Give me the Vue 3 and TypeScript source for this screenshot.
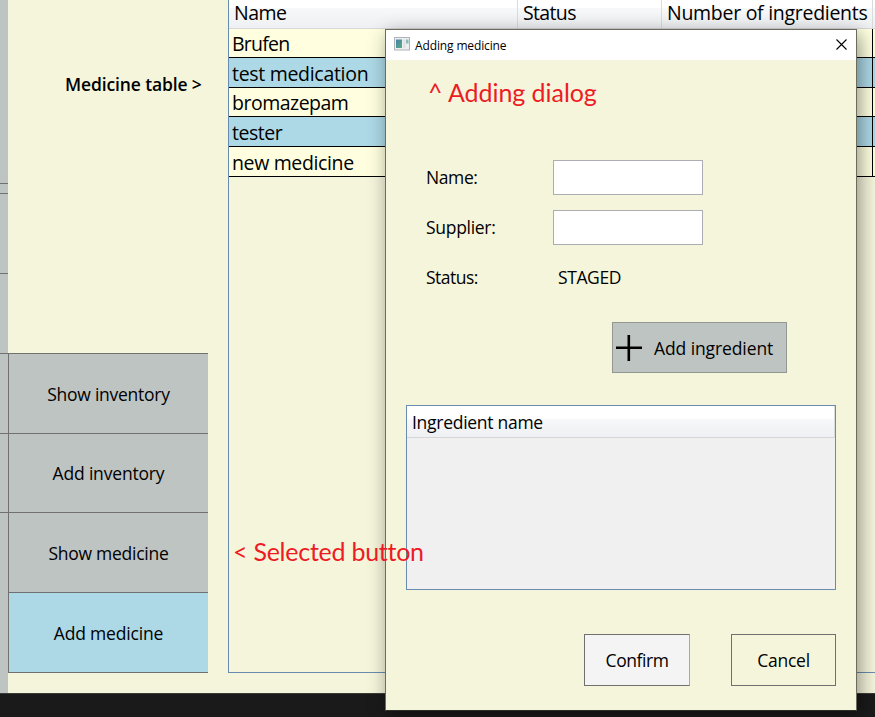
<script setup lang="ts">
interface Medicine {
  name: string
  key: string
}

const medicines: Medicine[] = [
  { name: 'Brufen', key: 'brufen' },
  { name: 'test medication', key: 'test' },
  { name: 'bromazepam', key: 'bromazepam' },
  { name: 'tester', key: 'tester' },
  { name: 'new medicine', key: 'new' },
]

const menu = [
  { label: 'Show inventory', key: 'show-inventory', selected: false },
  { label: 'Add inventory', key: 'add-inventory', selected: false },
  { label: 'Show medicine', key: 'show-medicine', selected: false },
  { label: 'Add medicine', key: 'add-medicine', selected: true },
]
</script>

<template>
  <div class="screen">
    <main class="window">
      <aside class="strip">
        <i v-for="n in 6" :key="n" class="strip-cell"></i>
      </aside>

      <section class="side">
        <h2 class="note"><span class="t-note">Medicine table &gt;</span></h2>
        <nav class="menu">
          <button v-for="item in menu" :key="item.key" class="menu-item" :class="{ selected: item.selected }">
            <span :class="'t-' + item.key">{{ item.label }}</span>
          </button>
        </nav>
      </section>

      <section class="grid">
        <header class="grid-head">
          <div class="head-cell"><span class="t-col-name">Name</span></div>
          <div class="head-cell"><span class="t-col-status">Status</span></div>
          <div class="head-cell"><span class="t-col-number">Number of ingredients</span></div>
          <div class="head-cell"></div>
        </header>
        <div v-for="m in medicines" :key="m.key" class="row" :class="'row-' + m.key">
          <div class="cell"><span :class="'t-' + m.key">{{ m.name }}</span></div>
          <div class="cell"></div>
          <div class="cell"></div>
          <div class="cell last"></div>
        </div>
      </section>
    </main>

    <div class="dialog" role="dialog">
      <header class="titlebar">
        <svg class="app-icon" width="16" height="14" viewBox="0 0 16 14">
          <defs>
            <linearGradient id="pane" x1="0" y1="0" x2="1" y2="1">
              <stop offset="0" stop-color="#4a7fae" />
              <stop offset="1" stop-color="#57b07c" />
            </linearGradient>
          </defs>
          <rect x="0.5" y="0.5" width="15" height="12.5" fill="#eceef0" stroke="#b0b4b9" />
          <rect x="2" y="2.5" width="6" height="8.5" fill="url(#pane)" />
          <rect x="9" y="2.5" width="2.5" height="8.5" fill="#dfe3e8" />
          <rect x="12" y="2.5" width="2.5" height="4" fill="#8bbdb9" />
        </svg>
        <span class="title"><span class="t-title">Adding medicine</span></span>
        <svg class="close" width="11" height="11" viewBox="0 0 11 11">
          <path d="M0.5 0.5L10.5 10.5M10.5 0.5L0.5 10.5" stroke="#000" stroke-width="1.1" fill="none" />
        </svg>
      </header>

      <div class="form">
        <label><span class="t-f-name">Name:</span></label>
        <input type="text" />
        <label><span class="t-f-supplier">Supplier:</span></label>
        <input type="text" />
        <label><span class="t-f-status">Status:</span></label>
        <div class="value"><span class="t-staged">STAGED</span></div>
      </div>

      <button class="add">
        <svg width="26" height="26" viewBox="0 0 26 26">
          <path d="M0 12.8H26M12.8 0V26" stroke="#000" stroke-width="2.6" fill="none" />
        </svg>
        <span class="t-add">Add ingredient</span>
      </button>

      <div class="list">
        <div class="list-head"><span class="t-ingredient">Ingredient name</span></div>
      </div>

      <footer class="actions">
        <button class="confirm"><span class="t-confirm">Confirm</span></button>
        <button class="cancel"><span class="t-cancel">Cancel</span></button>
      </footer>
    </div>

    <p class="callout callout-dialog"><span class="t-c1">^ Adding dialog</span></p>
    <p class="callout callout-button"><span class="t-c2">&lt; Selected button</span></p>
  </div>
</template>

<style>
body {
  margin: 0;
  overflow: hidden;
  background: #1a1a1a;
}
</style>

<style scoped>
.screen {
  position: relative;
  width: 875px;
  height: 717px;
  overflow: hidden;
  background: #1a1a1a;
  color: #000;
  font-family: "Open Sans", "Noto Sans", sans-serif;
  font-size: 17.5px;
}
.screen * {
  box-sizing: border-box;
}
span {
  white-space: nowrap;
}
button {
  padding: 0;
  border-radius: 0;
  font: inherit;
  color: inherit;
}
.t-note { letter-spacing: -0.13px; }
.t-col-name { letter-spacing: -0.5px; }
.t-col-status { letter-spacing: -0.65px; }
.t-col-number { letter-spacing: -0.28px; }
.t-brufen { letter-spacing: -0.75px; }
.t-test { letter-spacing: -0.3px; }
.t-bromazepam { letter-spacing: -0.5px; }
.t-tester { letter-spacing: -0.45px; }
.t-new { letter-spacing: -0.36px; }
.t-show-inventory, .t-show-medicine { letter-spacing: -0.25px; }
.t-add-inventory, .t-add-medicine { letter-spacing: -0.18px; }
.t-title { letter-spacing: -0.13px; }
.t-f-name { letter-spacing: -0.4px; }
.t-f-supplier { letter-spacing: -0.3px; }
.t-f-status { letter-spacing: -0.5px; }
.t-staged { letter-spacing: -0.4px; }
.t-add { letter-spacing: -0.1px; }
.t-ingredient { letter-spacing: -0.28px; }
.t-confirm { letter-spacing: -0.45px; }
.t-cancel { letter-spacing: -0.25px; }
.t-c1 { letter-spacing: -0.05px; }
.t-c2 { letter-spacing: -0.25px; }
.window {
  display: grid;
  grid-template-columns: 8px 200px 667px;
  height: 694px;
  border-bottom: 1px solid #3b3c38;
  background: #f5f5dc;
}
.strip {
  display: grid;
  grid-template-rows: 184px 10px 80px 80px 80px 79px;
  background: #bec4c2;
}
.strip-cell {
  border-bottom: 1px solid #707070;
}
.side {
  display: flex;
  flex-direction: column;
  padding-top: 68px;
}
.note {
  margin: 0;
  padding-left: 57px;
  height: 285px;
  font-size: 17.5px;
  font-weight: 600;
  line-height: 32px;
}
.menu {
  display: grid;
  grid-template-rows: 80px 79px 80px 80px;
  border-bottom: 1px solid #707070;
}
.menu-item {
  display: flex;
  align-items: center;
  justify-content: center;
  border: solid #707070;
  border-width: 1px 0 0 1px;
  background: #bec4c2;
}
.menu-item.selected {
  background: #add8e6;
}
.grid {
  margin-left: 20px;
  height: 673px;
  border: solid #688caf;
  border-width: 0 0 1px 1px;
  font-size: 19.5px;
}
.grid-head,
.row {
  display: grid;
  grid-template-columns: 289px 144px 211px 1fr;
}
.grid-head {
  height: 29px;
  border-bottom: 1px solid #d8d8d8;
  background: linear-gradient(#fff 0 8px, #f7f8f9 8px, #eff0f3 100%);
}
.head-cell {
  border-right: 1px solid #dadbdd;
  padding-left: 5px;
  line-height: 26px;
}
.head-cell:last-child {
  border-right: 0;
}
.row {
  height: 30px;
  grid-template-rows: 100%;
  border-bottom: 1px solid #000;
  background: #ffffe0;
}
.row-brufen,
.row-bromazepam {
  height: 29px;
}
.row-test,
.row-tester {
  background: #add8e6;
}
.cell {
  border-right: 1px solid #000;
  padding-left: 3px;
  line-height: 31px;
}
.row-brufen .cell,
.row-bromazepam .cell {
  line-height: 29px;
}
.cell.last {
  border-right: 0;
}
.dialog {
  position: absolute;
  left: 385px;
  top: 29px;
  width: 472px;
  height: 682px;
  border: 1px solid #6b6b5e;
  border-bottom-color: #2c2d29;
  background: #f5f5dc;
  box-shadow: 3px 5px 18px rgba(0, 0, 0, 0.42);
}
.titlebar {
  display: flex;
  align-items: center;
  height: 30px;
  padding: 0 10px 0 8px;
  background: #fff;
  font-size: 12px;
}
.app-icon {
  margin-top: -2px;
}
.title {
  flex: 1;
  padding-left: 5px;
}
.close {
  margin: -2px -0.5px 0 0;
}
.form {
  display: grid;
  grid-template-columns: 127px 150px;
  grid-auto-rows: 35px;
  row-gap: 15px;
  padding: 100px 0 0 40px;
  line-height: 35px;
}
input {
  width: 150px;
  height: 35px;
  margin: 0;
  padding: 0 4px;
  border: 1px solid #abadb3;
  border-radius: 0;
  background: #fff;
}
.value {
  padding-left: 5px;
}
.add {
  display: flex;
  align-items: center;
  gap: 12px;
  width: 175px;
  height: 51px;
  margin: 27px 0 0 226px;
  padding-left: 3px;
  border: 1px solid #939791;
  background: #bec4c2;
}
.list {
  width: 430px;
  height: 185px;
  margin: 32px 0 0 20px;
  border: 1px solid #688caf;
  background: #f0f0f0;
}
.list-head {
  height: 32px;
  padding-left: 5px;
  border-bottom: 1px solid #d5d5d5;
  border-right: 1px solid #dadbdd;
  background: linear-gradient(#fff 0 13px, #f7f8f9 13px, #eff0f3 100%);
  line-height: 33px;
}
.actions {
  display: flex;
  gap: 41px;
  padding: 44px 0 0 198px;
}
.actions button {
  width: 106px;
  height: 52px;
  border: 1px solid #707070;
  background: #f5f5dc;
}
.actions .confirm {
  background: #f4f4f4;
  border-right-color: #a9a9a0;
}
.actions .cancel {
  width: 105px;
}
.callout {
  position: absolute;
  margin: 0;
  color: #ed1c24;
  font-family: Lato, "Open Sans", sans-serif;
  font-size: 25px;
  line-height: 30px;
}
.callout-dialog {
  left: 428px;
  top: 77px;
}
.callout-button {
  left: 233px;
  top: 536px;
}
</style>
